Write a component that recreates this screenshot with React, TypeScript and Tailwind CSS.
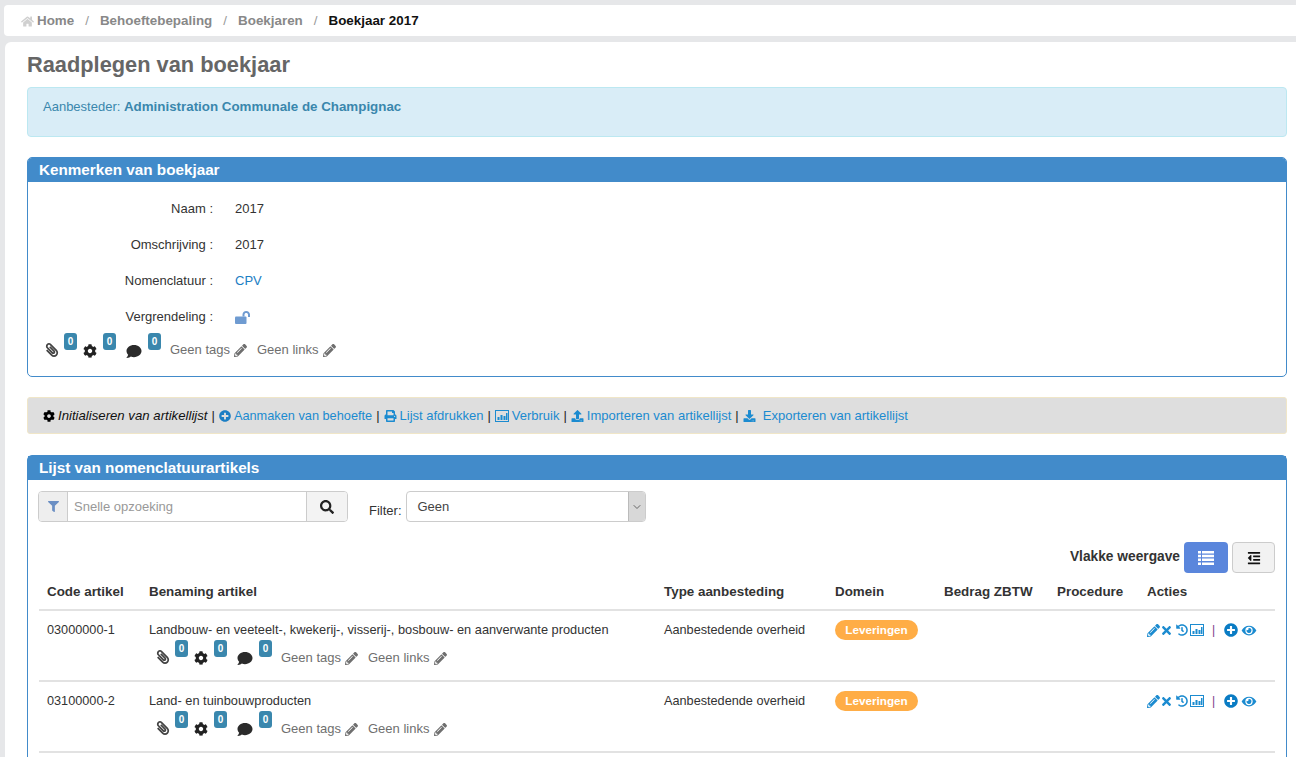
import React from "react";
import {
  FaHome, FaPaperclip, FaCog, FaComment, FaPencilAlt, FaTimes, FaHistory, FaPlusCircle, FaEye,
  FaFilter, FaSearch, FaPrint, FaUpload, FaDownload, FaOutdent,
} from "react-icons/fa";
import { LuChevronDown } from "react-icons/lu";

function BoxChart({ className }: { className?: string }) {
  return (
    <svg viewBox="0 0 14 12" className={className} fill="currentColor">
      <path fillRule="evenodd" d="M0 0h14v12H0zM1 1v10h12V1z" />
      <rect x="2.5" y="7" width="2" height="3" />
      <rect x="5.5" y="5" width="2" height="5" />
      <rect x="8.5" y="6" width="2" height="4" />
      <rect x="11" y="3" width="1.5" height="7" />
    </svg>
  );
}

function OpenLock({ className }: { className?: string }) {
  return (
    <svg viewBox="0 0 16 13" className={className} fill="currentColor">
      <rect x="0" y="5.5" width="11.5" height="7.5" rx="1" />
      <path d="M7.5 5.5V3.6C7.5 1.6 9.1 0 11.2 0S15 1.6 15 3.6V6h-2V3.6c0-1-.8-1.7-1.8-1.7S9.5 2.6 9.5 3.6v1.9z" />
    </svg>
  );
}

function ListIcon({ className }: { className?: string }) {
  return (
    <svg viewBox="0 0 16 14" className={className} fill="currentColor">
      <path d="M0 0h3v2.5H0zM4 0h12v2.5H4zM0 3.8h3v2.5H0zM4 3.8h12v2.5H4zM0 7.6h3v2.5H0zM4 7.6h12v2.5H4zM0 11.4h3v2.5H0zM4 11.4h12v2.5H4z" />
    </svg>
  );
}

function Badge({ className }: { className: string }) {
  return (
    <span className={`absolute top-0 ${className} flex h-[17px] w-[13px] items-center justify-center rounded-[3px] bg-[#3a87ad] text-[10px] leading-none font-bold text-white`}>
      0
    </span>
  );
}

function Meta({ className, labelClass }: { className?: string; labelClass: string }) {
  return (
    <div className={`flex h-[34px] items-start text-[13px] text-[#6f6f6f] ${className ?? ""}`}>
      <span className="relative h-[34px] w-[38px] shrink-0">
        <FaPaperclip className="absolute top-[10px] left-0 h-[14px] w-[14px] -scale-x-100 text-[#444]" />
        <Badge className="left-[19px]" />
      </span>
      <span className="relative h-[34px] w-[43px] shrink-0">
        <FaCog className="absolute top-[11px] left-0 h-[14px] w-[14px] text-[#222]" />
        <Badge className="left-[20px]" />
      </span>
      <span className="relative h-[34px] w-[44px] shrink-0">
        <FaComment className="absolute top-[11px] left-0 h-[15px] w-[16px] text-[#2b2b2b]" />
        <Badge className="left-[22px]" />
      </span>
      <span className={`${labelClass} flex items-center gap-[4px] leading-[16px]`}>
        Geen tags <FaPencilAlt className="h-[13px] w-[13px]" />
      </span>
      <span className={`${labelClass} ml-[10px] flex items-center gap-[5px] leading-[16px]`}>
        Geen links <FaPencilAlt className="h-[13px] w-[13px]" />
      </span>
    </div>
  );
}

function Field({ label, children }: { label: string; children: React.ReactNode }) {
  return (
    <div className="flex h-[36px] items-center text-[13px] text-[#333]">
      <span className="w-[186px] pr-[1px] text-right">{label} :</span>
      <span className="ml-[21px]">{children}</span>
    </div>
  );
}

function Sep() {
  return <span className="mx-[4px] text-[#222]">|</span>;
}

function Row({ code, name }: { code: string; name: string }) {
  return (
    <tr className="h-[71px] border-b-2 border-[#e2e2e2] align-top text-[12.7px] text-[#333]">
      <td className="px-2 pt-[11px] leading-[16px]">{code}</td>
      <td className="px-2 pt-[11px] leading-[16px]">
        <div className="text-[12.8px]">{name}</div>
        <Meta className="mt-[2px] ml-[7px]" labelClass="mt-[10px]" />
      </td>
      <td className="px-2 pt-[11px] leading-[16px]">Aanbestedende overheid</td>
      <td className="px-2 pt-[9px]">
        <span className="inline-flex h-[20px] w-[83px] items-center justify-center rounded-full bg-[#ffad46] text-[11.7px] font-bold text-white">
          Leveringen
        </span>
      </td>
      <td></td>
      <td></td>
      <td className="px-2 pt-[11px]">
        <div className="flex h-[16px] items-center text-[#1b8bd0]">
          <FaPencilAlt className="h-[13px] w-[13px]" />
          <FaTimes className="h-[13px] w-[13px]" />
          <FaHistory className="ml-[3px] h-[12px] w-[12px]" />
          <BoxChart className="ml-[2px] h-[12px] w-[14px]" />
          <span className="ml-[8px] text-[12px] text-[#7a3a8a]">|</span>
          <FaPlusCircle className="ml-[9px] h-[14px] w-[14px] text-[#0a7cc4]" />
          <FaEye className="ml-[3px] h-[13px] w-[16px]" />
        </div>
      </td>
    </tr>
  );
}

export default function App() {
  return (
    <div className="h-[757px] overflow-hidden bg-[#e6e7e9] pt-[5px] pl-[4px] font-['Liberation_Sans',Arial,sans-serif]">
      <nav className="flex h-[31px] items-center rounded-l-[4px] bg-white pt-[1px] pl-[17px] text-[13.4px] font-bold text-[#888]">
        <FaHome className="h-[13px] w-[13px] text-[#d0d0d0]" />
        <span className="ml-[3px]">Home</span>
        <span className="mx-[11px] font-normal text-[#999]">/</span>
        <span>Behoeftebepaling</span>
        <span className="mx-[11px] font-normal text-[#999]">/</span>
        <span>Boekjaren</span>
        <span className="mx-[11px] font-normal text-[#999]">/</span>
        <span className="text-[#111]">Boekjaar 2017</span>
      </nav>

      <main className="mt-[6px] ml-[1px] h-[720px] rounded-tl-[6px] bg-white pr-[9px] pl-[22px]">
        <h1 className="pt-[10px] text-[21.8px] leading-[26px] font-bold text-[#666]">Raadplegen van boekjaar</h1>

        <div className="mt-[9px] h-[50px] rounded-[4px] border border-[#bce8f1] bg-[#d9edf7] px-[15px] pt-[11px] text-[13px] leading-[16px] text-[#3a87ad]">
          Aanbesteder: <strong className="text-[13.35px]">Administration Communale de Champignac</strong>
        </div>

        <section className="mt-[20px] h-[220px] overflow-hidden rounded-[5px] border border-[#428bca]">
          <h2 className="flex h-[24px] items-center bg-[#428bca] pl-[11px] text-[15.25px] font-bold text-white">Kenmerken van boekjaar</h2>
          <div className="pt-[9px]">
            <Field label="Naam">2017</Field>
            <Field label="Omschrijving">2017</Field>
            <Field label="Nomenclatuur"><span className="text-[#1b7ec4]">CPV</span></Field>
            <Field label="Vergrendeling"><OpenLock className="h-[13px] w-[16px] text-[#6f9bd1]" /></Field>
            <Meta className="mt-[-2px] ml-[17px]" labelClass="mt-[9px]" />
          </div>
        </section>

        <div className="mt-[20px] flex h-[37px] items-center rounded-[3px] border border-[#f0e6c8] bg-[#dedede] pl-[15px] text-[13px] text-[#1b8bd0]">
          <FaCog className="mr-[3px] h-[12px] w-[12px] text-black" />
          <em className="text-[13.2px] text-[#111]">Initialiseren van artikellijst</em>
          <Sep />
          <FaPlusCircle className="mr-[3px] h-[12px] w-[12px] text-[#1b7ec4]" /><span className="text-[12.75px]">Aanmaken van behoefte</span>
          <Sep />
          <FaPrint className="mr-[3px] h-[12px] w-[13px]" />Lijst afdrukken
          <Sep />
          <BoxChart className="mr-[3px] h-[12px] w-[14px]" />Verbruik
          <Sep />
          <FaUpload className="mr-[3px] h-[12px] w-[13px]" />Importeren van artikellijst
          <Sep />
          <FaDownload className="mr-[7px] h-[12px] w-[13px]" />Exporteren van artikellijst
        </div>

        <section className="mt-[21px] h-[400px] rounded-t-[5px] border border-[#428bca]">
          <h2 className="flex h-[24px] items-center bg-[#428bca] pl-[11px] text-[15.25px] font-bold text-white">Lijst van nomenclatuurartikels</h2>
          <div className="pl-[10px]">
            <div className="flex items-start pt-[11px]">
              <div className="flex h-[31px] w-[310px] overflow-hidden rounded-[4px] border border-[#ccc] text-[13px]">
                <span className="flex w-[29px] items-center justify-center border-r border-[#ccc] bg-[#eeeeee]">
                  <FaFilter className="h-[11px] w-[11px] text-[#6b8fc4]" />
                </span>
                <span className="flex flex-1 items-center pl-[6px] text-[#999]">Snelle opzoeking</span>
                <span className="flex w-[41px] items-center justify-center border-l border-[#ccc] bg-[#f3f3f3]">
                  <FaSearch className="h-[14px] w-[14px] text-[#222]" />
                </span>
              </div>
              <span className="mt-[12px] ml-[21px] text-[13px] leading-[16px] text-[#333]">Filter:</span>
              <div className="ml-[4px] flex h-[31px] w-[240px] overflow-hidden rounded-[4px] border border-[#ccc] text-[13px] text-[#444]">
                <span className="flex flex-1 items-center pl-[11px]">Geen</span>
                <span className="flex w-[17px] items-center justify-center border-l border-[#bbb] bg-[#d8d8d8]">
                  <LuChevronDown className="h-[12px] w-[12px] text-[#666]" />
                </span>
              </div>
            </div>

            <div className="mt-[20px] flex h-[31px] w-[1237px] items-center justify-end">
              <span className="mr-[4px] text-[13.75px] font-bold text-[#333]">Vlakke weergave</span>
              <span className="flex h-[31px] w-[44px] items-center justify-center rounded-[4px] bg-[#5a86dc] text-white">
                <ListIcon className="h-[14px] w-[16px]" />
              </span>
              <span className="ml-[4px] flex h-[31px] w-[43px] items-center justify-center rounded-[4px] border border-[#ccc] bg-[#f2f2f2] text-[#111]">
                <FaOutdent className="h-[14px] w-[16px]" />
              </span>
            </div>

            <table className="ml-[1px] w-[1236px] table-fixed border-collapse">
              <colgroup>
                <col className="w-[102px]" />
                <col className="w-[515px]" />
                <col className="w-[171px]" />
                <col className="w-[109px]" />
                <col className="w-[113px]" />
                <col className="w-[90px]" />
                <col className="w-[136px]" />
              </colgroup>
              <thead>
                <tr className="h-[37px] border-b-2 border-[#e2e2e2] text-left text-[13.4px] text-[#333]">
                  <th className="px-2 pt-[2px] font-bold">Code artikel</th>
                  <th className="px-2 pt-[2px] font-bold">Benaming artikel</th>
                  <th className="px-2 pt-[2px] font-bold">Type aanbesteding</th>
                  <th className="px-2 pt-[2px] font-bold">Domein</th>
                  <th className="px-2 pt-[2px] font-bold">Bedrag ZBTW</th>
                  <th className="px-2 pt-[2px] font-bold">Procedure</th>
                  <th className="px-2 pt-[2px] font-bold">Acties</th>
                </tr>
              </thead>
              <tbody>
                <Row code="03000000-1" name="Landbouw- en veeteelt-, kwekerij-, visserij-, bosbouw- en aanverwante producten" />
                <Row code="03100000-2" name="Land- en tuinbouwproducten" />
              </tbody>
            </table>
          </div>
        </section>
      </main>
    </div>
  );
}
